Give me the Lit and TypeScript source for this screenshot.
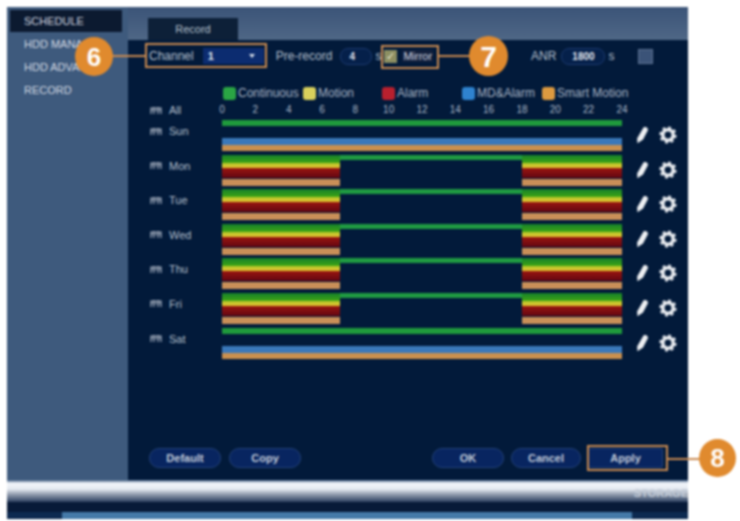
import { LitElement, html, css, svg } from "lit";
import { customElement } from "lit/decorators.js";

const TICKS = ["0", "2", "4", "6", "8", "10", "12", "14", "16", "18", "20", "22", "24"];
const LEGEND = [
  ["Continuous", "green"],
  ["Motion", "yellow"],
  ["Alarm", "red"],
  ["MD&Alarm", "blue"],
  ["Smart Motion", "orange"],
];
const DAYS = [
  ["Sun", true],
  ["Mon", false],
  ["Tue", false],
  ["Wed", false],
  ["Thu", false],
  ["Fri", false],
  ["Sat", true],
] as const;

const cal = svg`<svg class="cal" viewBox="0 0 12 9"><path d="M1 8V2h10v6M1 4h10M4 1v2M8 1v2M4 4v4M8 4v4" fill="none" stroke="#b9c2cf" stroke-width="1.1"/></svg>`;
const pen = svg`<svg class="ico" viewBox="0 0 20 20"><path d="M11.5 2.5c2.4-1.2 5 .6 4.3 3L11 14.5l-5.5 3.7-.4-4.6z" fill="#eef0f3"/></svg>`;
const gear = svg`<svg class="ico" viewBox="0 0 20 20"><circle cx="10" cy="10" r="5.2" fill="none" stroke="#e9ecf0" stroke-width="3.6"/><circle cx="10" cy="10" r="7.4" fill="none" stroke="#e9ecf0" stroke-width="2.4" stroke-dasharray="2.9 2.9"/></svg>`;

@customElement("app-root")
export class AppRoot extends LitElement {
  static styles = css`
    :host {
      display: block;
      width: 740px;
      height: 521px;
      background: #fff;
      overflow: hidden;
      font-family: "Liberation Sans", Arial, sans-serif;
      font-size: 12px;
      color: #b7c1cf;
    }
    .shot {
      position: relative;
      width: 740px;
      height: 521px;
      padding: 7px 52px 2px 7px;
      box-sizing: border-box;
      filter: blur(1.1px);
    }
    .frame {
      display: flex;
      flex-direction: column;
      height: 512px;
    }
    .top {
      display: flex;
      height: 473px;
    }
    .side {
      width: 121px;
      background: #3e5a7d;
      padding: 3px 6px 0 3px;
      box-sizing: border-box;
      flex: none;
    }
    .side div {
      height: 23px;
      line-height: 22px;
      padding-left: 14px;
      font-size: 11px;
      color: #d5dbe4;
      white-space: nowrap;
      overflow: hidden;
    }
    .side div.on {
      background: #0c1a30;
      height: 22px;
      margin-bottom: 1px;
    }
    .right {
      flex: 1;
      display: flex;
      flex-direction: column;
      min-width: 0;
    }
    .head {
      height: 33px;
      flex: none;
      background: linear-gradient(#3b5478, #4f6786);
      display: flex;
      align-items: flex-end;
      padding-left: 20px;
    }
    .tab {
      width: 90px;
      height: 22px;
      line-height: 23px;
      text-align: center;
      background: #0d2038;
      font-size: 11px;
      color: #b9c4d0;
    }
    .main {
      flex: 1;
      background: #021a3a;
      display: flex;
      flex-direction: column;
      padding: 4px 0 12px 21px;
      min-height: 0;
    }
    .toolbar {
      display: flex;
      align-items: center;
      height: 24px;
      flex: none;
      white-space: nowrap;
    }
    .select {
      width: 61px;
      height: 16px;
      margin-left: 9px;
      background: #0c2c70;
      color: #e4e8ef;
      display: flex;
      justify-content: space-between;
      align-items: center;
      padding: 0 9px 0 5px;
      box-sizing: border-box;
      font-weight: bold;
      font-size: 11px;
    }
    .arrow {
      width: 0;
      height: 0;
      border: 3px solid transparent;
      border-top: 4px solid #dbe2ec;
      border-bottom: none;
    }
    .prerec { margin-left: 12px; }
    .input {
      height: 15px;
      border: 1px solid #1c3a70;
      border-radius: 8px;
      background: #05204a;
      color: #e4e8ef;
      font-weight: bold;
      font-size: 10px;
      line-height: 15px;
      text-align: center;
      box-sizing: content-box;
    }
    .pre { margin-left: 8px; padding-right: 8px; width: 22px; }
    .unit { margin-left: 3px; }
    .check {
      width: 13px;
      height: 13px;
      margin-left: 3px;
      background: #8d8f62;
      color: #e6e6d0;
      font-size: 11px;
      line-height: 13px;
      text-align: center;
    }
    .mirror { margin-left: 5px; font-size: 11px; color: #d4d8e2; background: #13203c; padding: 0 1px; }
    .anr { margin-left: 98px; }
    .anrv { width: 42px; margin-left: 5px; }
    .box {
      width: 13px;
      height: 13px;
      margin-left: 24px;
      background: #3b5378;
      border: 1px solid #5d7292;
    }
    .legend {
      display: grid;
      grid-template-columns: 80px 79px 80px 80px auto;
      margin: 18px 0 0 74px;
      height: 14px;
      flex: none;
      white-space: nowrap;
    }
    .legend div {
      display: flex;
      align-items: center;
      gap: 2px;
      color: #a9b6c6;
    }
    .sw {
      width: 13px;
      height: 13px;
      border-radius: 3px;
      flex: none;
    }
    .sw.green { background: #2aa544; }
    .sw.yellow { background: #d8d05c; }
    .sw.red { background: #b8202e; }
    .sw.blue { background: #2f83cf; }
    .sw.orange { background: #dd9a40; }
    .ticksrow {
      display: flex;
      height: 12px;
      margin-top: 4px;
      flex: none;
      font-size: 10px;
      line-height: 12px;
    }
    .lab {
      width: 73px;
      flex: none;
      display: flex;
      align-items: center;
      gap: 7px;
      height: 12px;
      font-size: 11px;
      padding-left: 1px;
      box-sizing: border-box;
    }
    .cal { width: 12px; height: 9px; flex: none; }
    .ticks {
      width: 400px;
      display: flex;
      justify-content: space-between;
    }
    .ticks span {
      width: 0;
      display: flex;
      justify-content: center;
      color: #aebaca;
    }
    .rows { margin-top: 4px; flex: none; }
    .row {
      display: flex;
      height: 34.6px;
    }
    .row .lab { margin-top: 5px; }
    .track { width: 400px; flex: none; display: flex; flex-direction: column; }
    .lane { flex: none; }
    .split {
      display: grid;
      grid-template-columns: 118fr 182fr 100fr;
    }
    .g { height: 6px; background: #1f9a3c; margin-bottom: 12px; }
    .gs { height: 8px; background: linear-gradient(#147f2c, #3fa514); }
    .gm { height: 5px; background: #1f9a42; }
    .y { height: 5px; background: linear-gradient(#b7c92a, #e0c030); }
    .r { height: 10px; background: linear-gradient(#9a1610, #620612); margin-bottom: 1px; }
    .o { height: 7px; background: #c98f58; }
    .b { height: 7px; background: #3a78ba; }
    .o2 { height: 6px; background: #c9904f; }
    .acts {
      display: flex;
      align-items: flex-start;
      gap: 6px;
      margin-left: 10px;
      padding-top: 5px;
    }
    .ico { width: 20px; height: 20px; display: block; }
    .spacer { flex: 1; }
    .btns {
      display: flex;
      flex: none;
      height: 20px;
    }
    .btn {
      width: 72px;
      height: 20px;
      box-sizing: border-box;
      border: 1px solid #234279;
      border-radius: 10px;
      background: #082560;
      text-align: center;
      line-height: 18px;
      font-size: 11px;
      font-weight: bold;
      color: #c3ccda;
      flex: none;
    }
    .copy { margin-left: 8px; }
    .ok { margin-left: 131px; }
    .cancel { margin-left: 7px; width: 70px; }
    .apply { margin-left: 7px; width: 75px; border-radius: 2px; }
    .strip {
      flex: 1;
      display: flex;
      flex-direction: column;
      background: #071a38;
    }
    .shine {
      height: 22px;
      padding-top: 1px;
      background: linear-gradient(#3c5a80 0, #f2f5fa 3px, #e6ebf2 9px, #8995a8 15px, #2c4060 22px);
      text-align: right;
      font-size: 11px;
      font-weight: bold;
      line-height: 24px;
      color: #c4ccd8;
      white-space: nowrap;
      overflow: hidden;
      box-sizing: border-box;
    }
    .gap { height: 10px; }
    .base {
      flex: 1;
      display: grid;
      grid-template-columns: 55px 1fr 56px;
    }
    .base i:nth-child(1), .base i:nth-child(3) { background: #0d2a50; }
    .base i:nth-child(2) { background: #457aa8; }
    .hl {
      position: absolute;
      border: 2px solid #c98a50;
      box-sizing: border-box;
    }
    .h1 { left: 145px; top: 43px; width: 122px; height: 25px; }
    .h2 { left: 381px; top: 45px; width: 58px; height: 24px; }
    .h3 { left: 587px; top: 445px; width: 81px; height: 26px; }
    .wire {
      position: absolute;
      height: 2px;
      background: #c98a50;
    }
    .w1 { left: 108px; top: 55px; width: 38px; }
    .w2 { left: 438px; top: 55px; width: 40px; }
    .w3 { left: 667px; top: 458px; width: 36px; }
    .badge {
      position: absolute;
      border-radius: 50%;
      background: #e08a2e;
      color: #fff;
      font-weight: bold;
      text-align: center;
    }
    .b6 { left: 75px; top: 37px; width: 38px; height: 39px; line-height: 40px; font-size: 26px; }
    .b7 { left: 469px; top: 36px; width: 39px; height: 40px; line-height: 41px; font-size: 30px; }
    .b8 { left: 699px; top: 439px; width: 37px; height: 38px; line-height: 39px; font-size: 26px; }
  `;

  render() {
    return html`
      <div class="shot">
        <div class="frame">
          <div class="top">
            <nav class="side">
              <div class="on">SCHEDULE</div>
              <div>HDD MANAGE</div>
              <div>HDD ADVANCE</div>
              <div>RECORD</div>
            </nav>
            <div class="right">
              <div class="head"><div class="tab">Record</div></div>
              <div class="main">
                <div class="toolbar">
                  <span>Channel</span>
                  <div class="select"><span>1</span><span class="arrow"></span></div>
                  <span class="prerec">Pre-record</span>
                  <div class="input pre">4</div>
                  <span class="unit">s</span>
                  <div class="check">✓</div>
                  <span class="mirror">Mirror</span>
                  <span class="anr">ANR</span>
                  <div class="input anrv">1800</div>
                  <span class="unit">s</span>
                  <div class="box"></div>
                </div>
                <div class="legend">
                  ${LEGEND.map(([t, c]) => html`<div><span class="sw ${c}"></span>${t}</div>`)}
                </div>
                <div class="ticksrow">
                  <div class="lab">${cal}<span>All</span></div>
                  <div class="ticks">${TICKS.map((t) => html`<span>${t}</span>`)}</div>
                </div>
                <div class="rows">
                  ${DAYS.map(([d, full]) => html`
                    <div class="row">
                      <div class="lab">${cal}<span>${d}</span></div>
                      ${full
                        ? html`<div class="track">
                            <div class="lane g"></div>
                            <div class="lane b"></div>
                            <div class="lane o2"></div>
                          </div>`
                        : html`<div class="track">
                            <div class="lane split">
                              <div class="gs"></div><div class="gm"></div><div class="gs"></div>
                            </div>
                            <div class="lane split"><div class="y"></div><div></div><div class="y"></div></div>
                            <div class="lane split"><div class="r"></div><div></div><div class="r"></div></div>
                            <div class="lane split"><div class="o"></div><div></div><div class="o"></div></div>
                          </div>`}
                      <div class="acts">${pen}${gear}</div>
                    </div>
                  `)}
                </div>
                <div class="spacer"></div>
                <div class="btns">
                  <div class="btn">Default</div>
                  <div class="btn copy">Copy</div>
                  <div class="btn ok">OK</div>
                  <div class="btn cancel">Cancel</div>
                  <div class="btn apply">Apply</div>
                </div>
              </div>
            </div>
          </div>
          <div class="strip">
            <div class="shine">STORAGE</div>
            <div class="gap"></div>
            <div class="base"><i></i><i></i><i></i></div>
          </div>
        </div>
        <div class="hl h1"></div>
        <div class="hl h2"></div>
        <div class="hl h3"></div>
        <div class="wire w1"></div>
        <div class="wire w2"></div>
        <div class="wire w3"></div>
        <div class="badge b6">6</div>
        <div class="badge b7">7</div>
        <div class="badge b8">8</div>
      </div>
    `;
  }
}
